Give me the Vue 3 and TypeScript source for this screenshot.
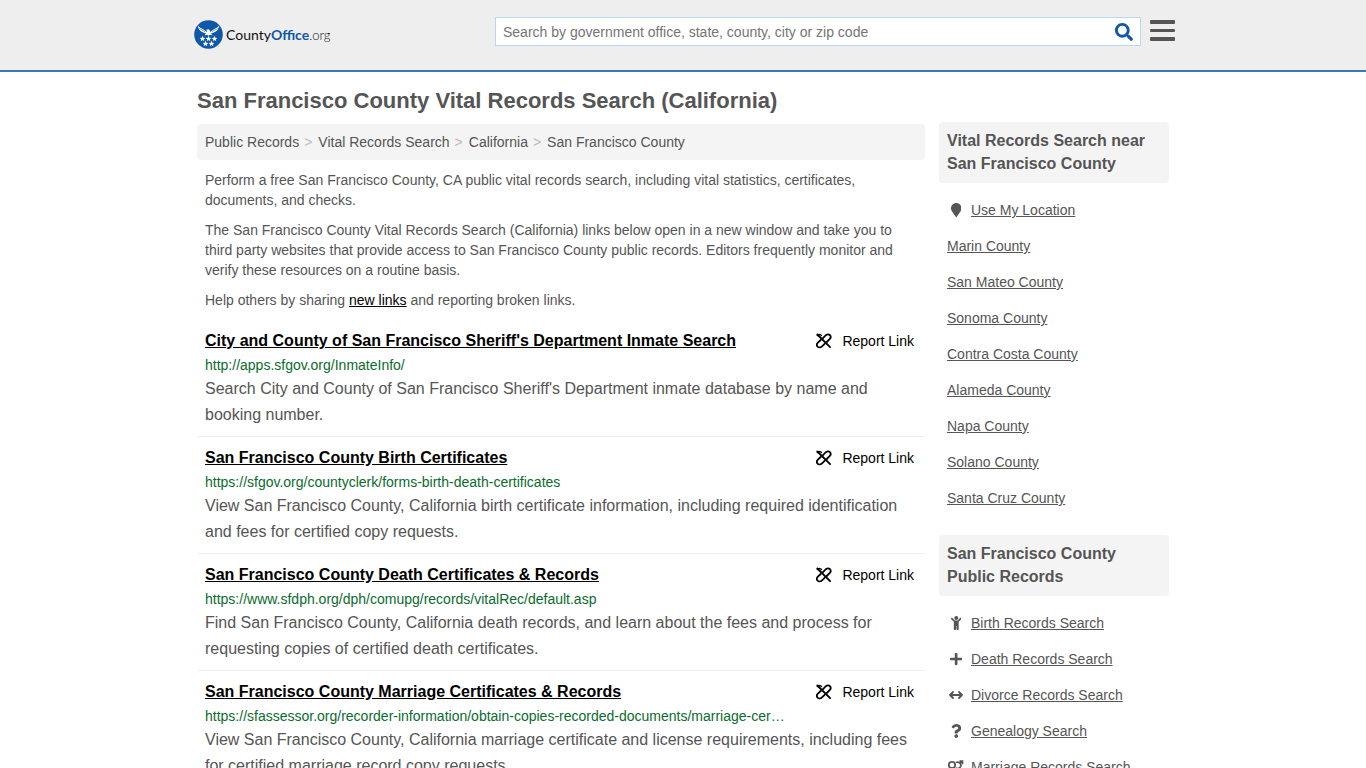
<script setup lang="ts">
interface RecordLink {
  title: string
  url: string
  text: string
}

interface SideLink {
  label: string
  icon?: string
}

const crumbs: string[] = ['Public Records', 'Vital Records Search', 'California', 'San Francisco County']

const records: RecordLink[] = [
  {
    title: "City and County of San Francisco Sheriff's Department Inmate Search",
    url: 'http://apps.sfgov.org/InmateInfo/',
    text: "Search City and County of San Francisco Sheriff's Department inmate database by name and booking number.",
  },
  {
    title: 'San Francisco County Birth Certificates',
    url: 'https://sfgov.org/countyclerk/forms-birth-death-certificates',
    text: 'View San Francisco County, California birth certificate information, including required identification and fees for certified copy requests.',
  },
  {
    title: 'San Francisco County Death Certificates & Records',
    url: 'https://www.sfdph.org/dph/comupg/records/vitalRec/default.asp',
    text: 'Find San Francisco County, California death records, and learn about the fees and process for requesting copies of certified death certificates.',
  },
  {
    title: 'San Francisco County Marriage Certificates & Records',
    url: 'https://sfassessor.org/recorder-information/obtain-copies-recorded-documents/marriage-cer…',
    text: 'View San Francisco County, California marriage certificate and license requirements, including fees for certified marriage record copy requests.',
  },
]

const nearby: SideLink[] = [
  { label: 'Use My Location', icon: 'marker' },
  { label: 'Marin County' },
  { label: 'San Mateo County' },
  { label: 'Sonoma County' },
  { label: 'Contra Costa County' },
  { label: 'Alameda County' },
  { label: 'Napa County' },
  { label: 'Solano County' },
  { label: 'Santa Cruz County' },
]

const publicRecords: SideLink[] = [
  { label: 'Birth Records Search', icon: 'child' },
  { label: 'Death Records Search', icon: 'plus' },
  { label: 'Divorce Records Search', icon: 'arrows' },
  { label: 'Genealogy Search', icon: 'question' },
  { label: 'Marriage Records Search', icon: 'couple' },
]

const groups = [
  { title: 'Vital Records Search near San Francisco County', links: nearby },
  { title: 'San Francisco County Public Records', links: publicRecords },
]

const glyphs: Record<string, { box: string; d: string }> = {
  marker: {
    box: '0 0 384 512',
    d: 'M172.268 501.67C26.97 291.031 0 269.413 0 192 0 85.961 85.961 0 192 0s192 85.961 192 192c0 77.413-26.97 99.031-172.268 309.67-9.535 13.774-29.93 13.773-39.464 0z',
  },
  child: {
    box: '0 0 384 512',
    d: 'M120 72c0-39.765 32.235-72 72-72s72 32.235 72 72c0 39.764-32.235 72-72 72s-72-32.236-72-72zm254.627 1.373c-12.496-12.497-32.758-12.497-45.254 0L242.745 160H141.254L54.627 73.373c-12.496-12.497-32.758-12.497-45.254 0-12.497 12.497-12.497 32.758 0 45.255L104 213.254V480c0 17.673 14.327 32 32 32h16c17.673 0 32-14.327 32-32V368h16v112c0 17.673 14.327 32 32 32h16c17.673 0 32-14.327 32-32V213.254l94.627-94.627c12.497-12.497 12.497-32.757 0-45.254z',
  },
  plus: {
    box: '0 0 448 512',
    d: 'M416 208H272V64c0-17.67-14.33-32-32-32h-32c-17.67 0-32 14.33-32 32v144H32c-17.67 0-32 14.33-32 32v32c0 17.67 14.33 32 32 32h144v144c0 17.67 14.33 32 32 32h32c17.67 0 32-14.33 32-32V304h144c17.67 0 32-14.33 32-32v-32c0-17.67-14.33-32-32-32z',
  },
  question: {
    box: '0 0 384 512',
    d: 'M202.021 0C122.202 0 70.503 32.703 29.914 91.026c-7.363 10.58-5.093 25.086 5.178 32.874l43.138 32.709c10.373 7.865 25.132 6.026 33.253-4.148 25.049-31.381 43.63-49.449 82.757-49.449 30.764 0 68.816 19.799 68.816 49.631 0 22.552-18.617 34.134-48.993 51.164-35.423 19.86-82.299 44.576-82.299 106.405V320c0 13.255 10.745 24 24 24h72.471c13.255 0 24-10.745 24-24v-5.773c0-42.86 125.268-44.645 125.268-160.627C377.504 66.256 286.902 0 202.021 0zM192 373.459c-38.196 0-69.271 31.075-69.271 69.271 0 38.195 31.075 69.27 69.271 69.27s69.271-31.075 69.271-69.271-31.075-69.27-69.271-69.27z',
  },
}

const star = 'M0-2.900L.8-.9 2.900-.8 1.300.5 1.800 2.600 0 1.400-1.800 2.600-1.300.5-2.900-.8-.8-.9z'
const stars = [
  [8.5, 18.7],
  [14.5, 18.7],
  [20.5, 18.7],
  [11.5, 23.7],
  [17.5, 23.7],
]
</script>

<template>
  <div class="page">
    <header class="top">
      <div class="top-inner">
        <a class="logo" href="#" aria-label="CountyOffice.org">
          <svg viewBox="0 0 29 29" width="29" height="29" aria-hidden="true">
            <circle cx="14.500" cy="14.500" r="14.300" fill="#0f57a8" />
            <path
              fill="#fff"
              d="M4 5.500c1.800 2.600 4.600 3.400 6.600 4.700.9.600 1.700 1.500 2.500 1.600.2-1-.4-1.500-1-1.900 1.200-.7 3-.8 3.700.3.300.5.200 1.100.1 1.600.9-.1 1.600-1 2.500-1.600 2-1.300 4.800-2.100 6.600-4.700-.1 2.900-1.300 4.700-3.200 5.900-1.900 1.100-3.500 1.200-4.700 2.100l1.500 1.900-2.500-.6-1.600 1-1.600-1-2.500.6 1.500-1.900c-1.200-.9-2.800-1-4.700-2.100C5.300 10.200 4.100 8.400 4 5.500z"
            />
            <path stroke="#0f57a8" stroke-width=".5" fill="none" d="M5.500 8.500l5.500 3.200M23.500 8.500L18 11.700" />
            <path
              v-for="(s, i) in stars"
              :key="i"
              :d="star"
              :transform="`translate(${s[0]} ${s[1]})`"
              fill="#fff"
            />
          </svg>
          <span class="brand">County<b>Office</b><i>.org</i></span>
        </a>
        <form class="search" role="search" @submit.prevent>
          <input type="text" aria-label="Search" placeholder="Search by government office, state, county, city or zip code" />
          <button type="submit" aria-label="Search">
            <svg viewBox="0 0 512 512" width="18" height="18" aria-hidden="true">
              <path
                fill="#0f57a8"
                d="M505 442.7L405.3 343c-4.500-4.500-10.600-7-17-7H372c27.600-35.300 44-79.700 44-128C416 93.100 322.900 0 208 0S0 93.100 0 208s93.100 208 208 208c48.300 0 92.700-16.400 128-44v16.300c0 6.400 2.500 12.500 7 17l99.700 99.700c9.400 9.400 24.600 9.400 33.900 0l28.300-28.300c9.400-9.400 9.400-24.600.1-34zM208 336c-70.700 0-128-57.200-128-128 0-70.700 57.200-128 128-128 70.700 0 128 57.200 128 128 0 70.700-57.200 128-128 128z"
              />
            </svg>
          </button>
        </form>
        <button class="menu" type="button" aria-label="Menu">
          <svg viewBox="0 0 25 22" width="25" height="22" aria-hidden="true">
            <g fill="#555">
              <rect width="25" height="4" rx="1" />
              <rect y="9" width="25" height="3" rx="1" />
              <rect y="17" width="25" height="4" rx="1" />
            </g>
          </svg>
        </button>
      </div>
    </header>

    <div class="wrap">
      <h1>San Francisco County Vital Records Search (California)</h1>
      <div class="columns">
        <main>
          <nav class="crumbs" aria-label="Breadcrumb">
            <template v-for="(c, i) in crumbs" :key="c">
              <span v-if="i" class="sep">&gt;</span>
              <a href="#">{{ c }}</a>
            </template>
          </nav>
          <div class="intro">
            <p>
              Perform a free San Francisco County, CA public vital records search, including vital statistics,
              certificates, documents, and checks.
            </p>
            <p>
              The San Francisco County Vital Records Search (California) links below open in a new window and take you
              to third party websites that provide access to San Francisco County public records. Editors frequently
              monitor and verify these resources on a routine basis.
            </p>
            <p>Help others by sharing <a href="#">new links</a> and reporting broken links.</p>
          </div>
          <article v-for="r in records" :key="r.title" class="record">
            <div class="record-head">
              <h2><a href="#">{{ r.title }}</a></h2>
              <button type="button" class="report">
                <svg viewBox="0 0 16 16" width="16" height="16" aria-hidden="true">
                  <g fill="none" stroke="#000" stroke-width="1.800" stroke-linecap="round" stroke-linejoin="round">
                    <path d="M1.300 1.500l12.800 12.700" />
                    <path d="M1.300 2.500C3 .9 4.600 1.500 5.500 2.500" stroke-width="1.300" />
                    <path d="M7 5.200l2.500-2.700c1.400-1.400 3.400-1.400 4.400-.4 1.100 1.200.9 2.900-.3 4.100L10.800 9" />
                    <path d="M8.600 10.800l-2.600 2.500c-1.400 1.400-3.400 1.400-4.400.4-1.100-1.200-.9-2.900.3-4.100L4.700 7" />
                  </g>
                </svg>
                <span>Report Link</span>
              </button>
            </div>
            <div class="url">{{ r.url }}</div>
            <p class="text">{{ r.text }}</p>
          </article>
        </main>

        <aside>
          <section v-for="g in groups" :key="g.title">
            <h3>{{ g.title }}</h3>
            <ul>
              <li v-for="l in g.links" :key="l.label">
                <span v-if="l.icon" class="icon">
                  <svg v-if="l.icon === 'couple'" viewBox="0 0 18 14" width="18" height="14" aria-hidden="true">
                    <g fill="none" stroke="#555" stroke-width="1.700">
                      <circle cx="5" cy="5" r="3.200" />
                      <path d="M5 8.200V14M2.500 11.200h5" />
                      <path d="M9 2.600a3.200 3.200 0 1 1 0 5.500" />
                      <path d="M12.800 3.200L15.300 1M12.500 1.200h3v3" />
                    </g>
                  </svg>
                  <svg v-else-if="l.icon === 'arrows'" viewBox="0 0 14 14" width="14" height="14" aria-hidden="true">
                    <path
                      fill="none"
                      stroke="#555"
                      stroke-width="1.800"
                      stroke-linecap="round"
                      stroke-linejoin="round"
                      d="M1 7h12M4 4L1 7l3 3M10 4l3 3-3 3"
                    />
                  </svg>
                  <svg v-else :viewBox="glyphs[l.icon].box" height="14" aria-hidden="true">
                    <path fill="#555" :d="glyphs[l.icon].d" />
                  </svg>
                </span>
                <a href="#">{{ l.label }}</a>
              </li>
            </ul>
          </section>
        </aside>
      </div>
    </div>
  </div>
</template>

<style>
body {
  margin: 0;
  background: #fff;
}
</style>

<style scoped>
* {
  box-sizing: border-box;
}
.page {
  font-family: "Liberation Sans", Arial, sans-serif;
  font-size: 14px;
  line-height: 20px;
  color: #555;
}
a {
  color: #555;
}
button {
  border: 0;
  padding: 0;
  background: none;
  font: inherit;
  cursor: pointer;
}
svg {
  display: block;
}
.top {
  height: 72px;
  background: #eee;
  border-bottom: 2px solid #337ab7;
}
.top-inner {
  max-width: 984px;
  margin: 0 auto;
  padding: 17px 0 0 3px;
  display: flex;
  align-items: flex-start;
}
.logo {
  display: flex;
  align-items: center;
  gap: 3px;
  margin-top: 3px;
  color: #111;
  text-decoration: none;
}
.brand {
  font-family: Lato, sans-serif;
  font-size: 14px;
}
.brand b {
  color: #0f57a8;
}
.brand i {
  font-style: normal;
  font-weight: 300;
  font-size: 13px;
}
.search {
  flex: 0 1 646px;
  height: 29px;
  margin-left: auto;
  display: flex;
  background: #fff;
  border: 1px solid #bcd7ea;
}
.search input {
  flex: 1;
  min-width: 0;
  border: 0;
  outline: 0;
  padding: 0 7px;
  background: none;
  font: inherit;
  color: #555;
}
.search input::placeholder {
  color: #757575;
  opacity: 1;
}
.search button {
  width: 32px;
  display: grid;
  place-items: center;
}
.menu {
  margin: 3px 0 0 9px;
}
.wrap {
  max-width: 972px;
  margin: 0 auto;
}
h1 {
  margin: 0;
  padding: 17px 0 9px;
  font-size: 22px;
  line-height: 24px;
}
.columns {
  display: flex;
  align-items: flex-start;
  gap: 14px;
}
main {
  flex: 1;
  min-width: 0;
  padding-top: 2px;
}
.crumbs {
  padding: 8px;
  display: flex;
  gap: 5px;
  background: #f4f4f4;
  border-radius: 4px;
}
.crumbs a {
  text-decoration: none;
}
.sep {
  margin-right: 1px;
  color: #bbb;
}
.intro {
  padding: 0 8px;
}
.intro p {
  margin: 10px 0;
}
.intro a {
  color: #000;
}
.record {
  padding: 8px;
  border-bottom: 1px solid #eee;
}
.record-head {
  display: flex;
  justify-content: space-between;
  align-items: center;
}
h2 {
  margin: 0;
  font-size: 16px;
  line-height: 26px;
}
h2 a {
  color: #000;
}
.report {
  display: flex;
  align-items: center;
  gap: 10px;
  padding-right: 3px;
  color: #000;
}
.url {
  line-height: 22px;
  color: #0a6b2d;
}
.text {
  margin: 0;
  font-size: 16px;
  line-height: 26px;
}
aside {
  flex: 0 0 230px;
}
aside section {
  margin-bottom: 19px;
}
h3 {
  margin: 0 0 9px;
  padding: 7px 8px 8px;
  font-size: 16px;
  line-height: 23px;
  background: #f4f4f4;
  border-radius: 4px;
}
ul {
  margin: 0;
  padding: 0 8px;
  list-style: none;
}
li {
  height: 36px;
  display: flex;
  align-items: center;
}
.icon {
  width: 18px;
  margin-right: 6px;
  display: grid;
  place-items: center;
}
</style>
